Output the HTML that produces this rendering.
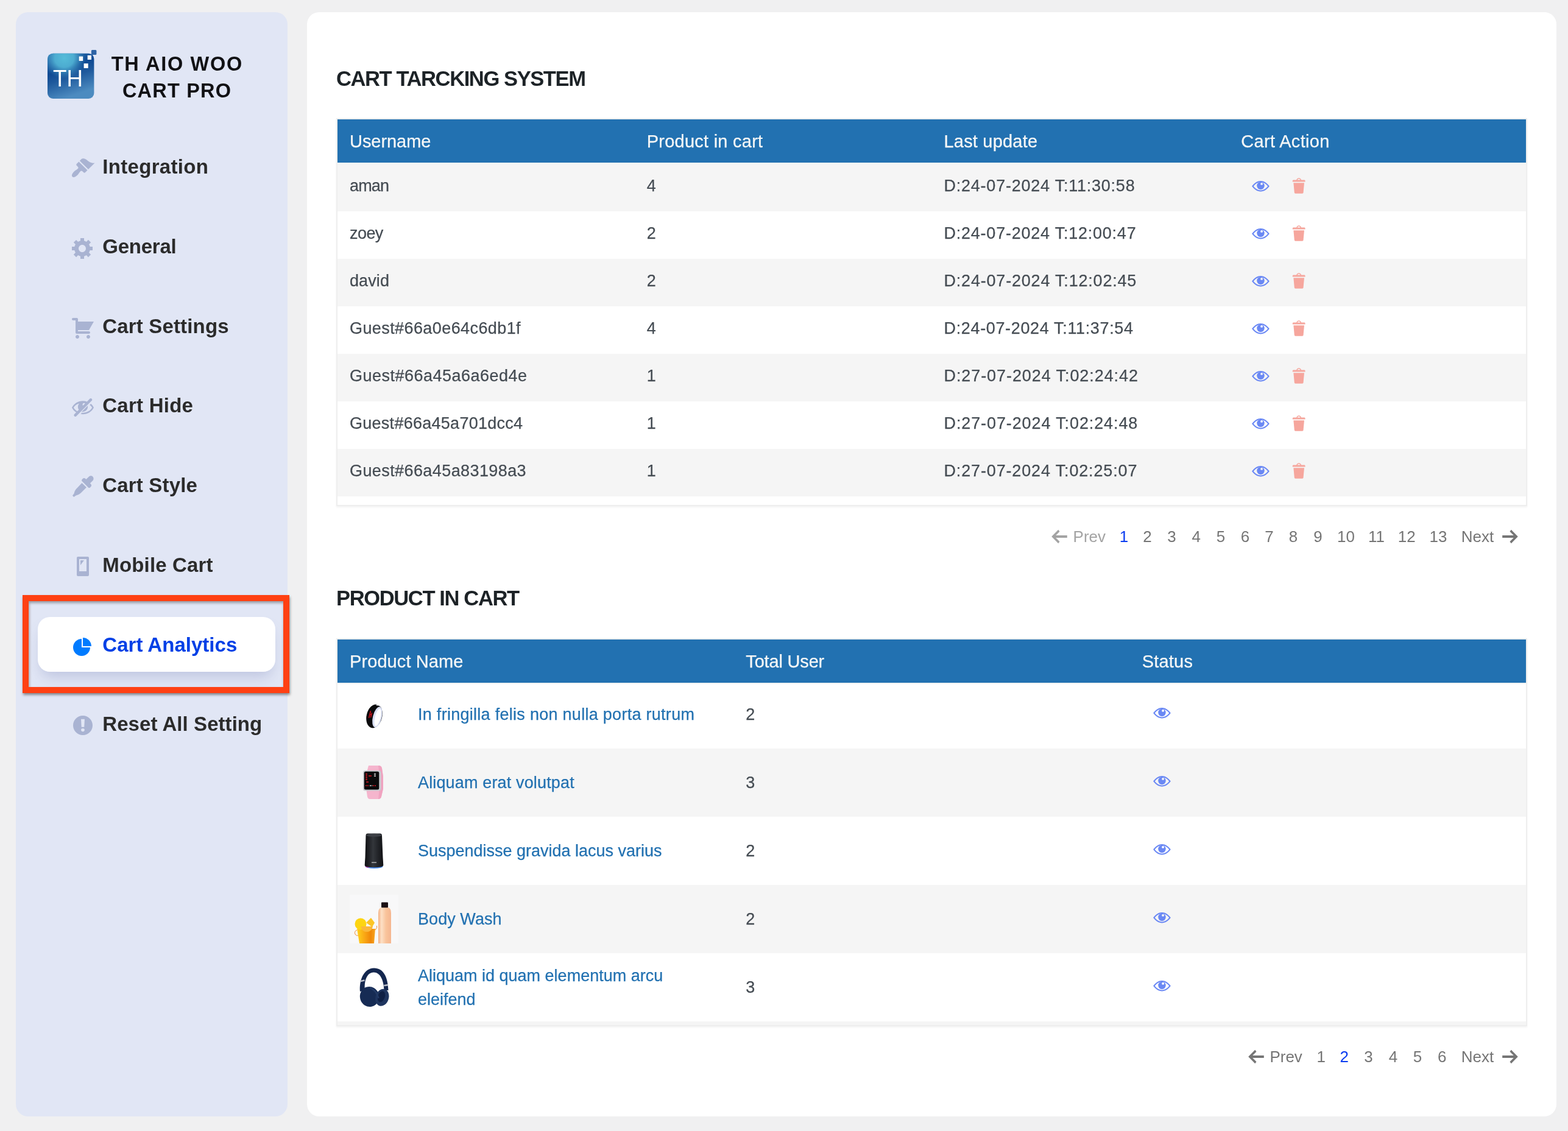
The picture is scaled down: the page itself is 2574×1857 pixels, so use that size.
<!DOCTYPE html>
<html lang="en">
<head>
<meta charset="utf-8">
<title>TH AIO Woo Cart Pro - Cart Analytics</title>
<style>

*{box-sizing:border-box;}
html,body{margin:0;padding:0;}
body{width:2574px;height:1857px;overflow:hidden;background:#f0f0f1;font-family:"Liberation Sans",sans-serif;color:#3c434a;}
.page{position:relative;width:2574px;height:1857px;overflow:hidden;will-change:transform;}
.sidebar{position:absolute;left:26px;top:20px;width:446px;height:1813px;background:#e1e6f5;border-radius:20px;}
.brand{position:absolute;left:0;top:0;width:446px;height:200px;}
.logo{position:absolute;left:52px;top:62px;}
.brand-name{position:absolute;left:134px;top:64px;width:260px;text-align:center;font-weight:700;font-size:32.5px;line-height:43.6px;color:#111114;white-space:nowrap;}
.bn1{letter-spacing:1.7px;margin-right:-1.7px;}
.bn2{letter-spacing:1.2px;margin-right:-1.2px;}
.nav-item{position:absolute;left:36px;width:390px;height:90px;border-radius:20px;display:block;text-decoration:none;color:#2b2b2b;}
.nav-item .ic{position:absolute;left:54px;top:27.5px;}
.nav-label{position:absolute;left:106.300px;top:0.500px;font-size:33px;font-weight:700;line-height:90px;white-space:nowrap;}
.nav-item.active{background:#fff;color:#0040e6;box-shadow:0 14px 22px -6px rgba(96,108,168,0.27);}
.hl{position:absolute;left:37px;top:977px;width:438px;height:161px;border:10px solid #ff4013;box-shadow:1px 3px 4px rgba(0,0,0,0.42), inset 1px 3px 4px rgba(0,0,0,0.34);}
.main{position:absolute;left:504px;top:20px;width:2051px;height:1813px;background:#fff;border-radius:20px;}
.ttl{position:absolute;left:48px;margin:0;font-size:34.600px;font-weight:700;color:#1d2327;line-height:40px;white-space:nowrap;}
.ttl1{top:88.500px;letter-spacing:-1.440px;}
.ttl2{top:941.700px;letter-spacing:-1.400px;}
.tw{position:absolute;left:48px;width:1955px;border:2px solid #eeeeee;box-shadow:0 2px 3px rgba(0,0,0,0.05);background:#fff;}
.tw1{top:174px;}
.tw2{top:1028px;}
.tbl{width:1951px;border-collapse:separate;border-spacing:0;table-layout:fixed;font-size:27px;}
.tbl th{height:73px;padding:1px 20px 0 20px;background:#2271b1;color:#f6f7f7;font-weight:400;font-size:29px;-webkit-text-stroke:0.25px #f6f7f7;text-align:left;border-bottom:2px solid #f3f3f3;vertical-align:middle;white-space:nowrap;}
.tbl td{height:78px;padding:0 20px 5.600px 20px;vertical-align:middle;color:#454c53;white-space:nowrap;-webkit-text-stroke:0.25px #454c53;}
.t1 tbody tr:nth-child(odd) td{background:#f5f5f5;}
.t2 tbody tr:nth-child(even) td{background:#f5f5f5;}
.tbl tr.tail td{height:14px;padding:0;}
.t2 tr.tail td{height:6px;background:#f5f5f5;}
.t2 td{height:112px;padding-bottom:0;}
.t2 tr.first td{height:106px;padding-bottom:6px;}
.ib{display:inline-block;width:32px;height:32px;margin:0 16px;vertical-align:middle;}
.ib .ic{display:block;}
.t1 .ib{position:relative;top:-3.5px;}
.t2 .ib{position:relative;top:-3.700px;}

td.act{padding-bottom:0;}
.prod{display:flex;align-items:center;}
.th{display:block;flex:none;}
.pl{margin-left:32px;color:#2271b1;-webkit-text-stroke:0.25px #2271b1;position:relative;top:0.500px;line-height:39px;white-space:normal;width:498px;}
.pager{position:absolute;left:0;width:2051px;height:40px;font-size:26px;color:#757575;}
.p1{top:841px;}
.p2{top:1695px;}
.pg{position:absolute;top:0;height:40px;line-height:40px;text-align:center;white-space:nowrap;}
.pg.prev,.pg.next{display:flex;align-items:center;text-align:left;}
.pg.cur{color:#0a3cf0;}
.pg.dis{color:#a3a3a3;}
.pg .arr{display:block;flex:none;}
.pg.prev .pt{margin-left:6.9px;}
.pg.next .pt{margin-right:10.5px;}

</style>
</head>
<body>
<div class="page">
<aside class="sidebar">
  <div class="brand">
    <svg class="logo" width="84" height="82" viewBox="0 0 84 82">
<defs>
<linearGradient id="lgA" x1="0" y1="0" x2="0.35" y2="1"><stop offset="0" stop-color="#2f74b2"/><stop offset="0.42" stop-color="#0f4a93"/><stop offset="0.62" stop-color="#1f5a9d"/><stop offset="1" stop-color="#4c8bc0"/></linearGradient>
<radialGradient id="lgB" cx="0.36" cy="0.1" r="0.46"><stop offset="0" stop-color="#55bcd9"/><stop offset="0.45" stop-color="#4fb0d3" stop-opacity="0.95"/><stop offset="1" stop-color="#3f8fc0" stop-opacity="0"/></radialGradient>
</defs>
<rect x="0" y="5.700" width="76.400" height="74.300" rx="9" fill="url(#lgA)"/>
<rect x="0" y="5.700" width="76.400" height="74.300" rx="9" fill="url(#lgB)"/>
<rect x="71.900" y="0" width="8.500" height="8" rx="1.500" fill="#2f64a6"/>
<rect x="51.700" y="10.600" width="6.500" height="7.400" fill="#fff"/>
<rect x="65.700" y="8.800" width="6.300" height="7.200" fill="#fff"/>
<rect x="59.600" y="22.200" width="7.100" height="7.700" fill="#fff"/>
<text x="9" y="60" font-family="'Liberation Sans', sans-serif" font-size="39" fill="#fff" textLength="49" lengthAdjust="spacingAndGlyphs">TH</text>
</svg>
    <div class="brand-name"><span class="bn1">TH AIO WOO</span><br><span class="bn2">CART PRO</span></div>
  </div>
  <nav>
<a class="nav-item" style="top:208.50px"><svg class="ic" width="40" height="40" viewBox="0 0 20 20" ><path fill="#a9b3d2" d="M14.48 11.06L7.41 3.99l1.5-1.5c.5-.56 2.3-.47 3.51.32 1.21.8 1.43 1.28 2.92 2.1 1.18.64 2.45 1.26 4.45.85zm-.71.71L6.7 4.7 4.93 6.47c-.39.39-.39 1.02 0 1.41l1.06 1.06c.39.39.39 1.03 0 1.42-.6.6-1.43 1.11-2.21 1.69-.35.26-.7.53-1.01.84C1.43 14.23.4 16.08 1.4 17.07c.99 1 2.84-.03 4.18-1.36.31-.31.58-.66.85-1.02.57-.78 1.08-1.61 1.69-2.21.39-.39 1.02-.39 1.41 0l1.06 1.06c.39.39 1.02.39 1.41 0z"/></svg><span class="nav-label" style="letter-spacing:0.31px">Integration</span></a>
<a class="nav-item" style="top:339.25px"><svg class="ic" width="40" height="40" viewBox="0 0 20 20" ><path fill="#a9b3d2" d="M18 12h-2.18c-.17.7-.44 1.35-.81 1.93l1.54 1.54-2.1 2.1-1.54-1.54c-.58.36-1.23.63-1.91.79V19H8v-2.18c-.68-.16-1.33-.43-1.91-.79l-1.54 1.54-2.12-2.12 1.54-1.54c-.36-.58-.63-1.23-.79-1.91H1V9.03h2.17c.16-.7.44-1.35.8-1.94L2.43 5.55l2.1-2.1 1.54 1.54c.58-.37 1.24-.64 1.93-.81V2h3v2.18c.68.16 1.33.43 1.91.79l1.54-1.54 2.12 2.12-1.54 1.54c.36.59.64 1.24.8 1.94H18V12zm-8.5 1.5c1.66 0 3-1.34 3-3s-1.34-3-3-3-3 1.34-3 3 1.34 3 3 3z"/></svg><span class="nav-label" style="letter-spacing:-0.25px">General</span></a>
<a class="nav-item" style="top:470.00px"><svg class="ic" width="40" height="40" viewBox="0 0 20 20" ><path fill="#a9b3d2" d="M6 13h9c.55 0 1 .45 1 1s-.45 1-1 1H5c-.55 0-1-.45-1-1V4H2c-.55 0-1-.45-1-1s.45-1 1-1h3c.55 0 1 .45 1 1v2h13l-4 7H6v1zm-.5 3c.83 0 1.5.67 1.5 1.5S6.33 19 5.5 19 4 18.33 4 17.5 4.67 16 5.5 16zm9 0c.83 0 1.5.67 1.5 1.5s-.67 1.5-1.5 1.5-1.5-.67-1.5-1.5.67-1.5 1.5-1.5z"/></svg><span class="nav-label" style="letter-spacing:0.16px">Cart Settings</span></a>
<a class="nav-item" style="top:600.75px"><svg class="ic" width="40" height="40" viewBox="0 0 20 20" ><path fill="#a9b3d2" d="M17.2 3.3l.16.17c.39.39.39 1.02 0 1.41L4.55 17.7c-.39.39-1.03.39-1.41 0l-.17-.17c-.39-.39-.39-1.02 0-1.41l1.59-1.6c-1.57-1-2.76-2.3-3.56-3.93.81-1.65 2.03-2.98 3.64-3.99S8.04 5.09 10 5.09c1.2 0 2.33.21 3.4.6l2.38-2.39c.39-.39 1.03-.39 1.42 0zm-7.09 4.01c-.23.25-.34.54-.34.88 0 .31.12.58.31.81l1.8-1.79c-.13-.12-.28-.21-.45-.26-.11-.01-.28-.03-.49-.04-.33.03-.6.16-.83.4zM2.4 10.59c.69 1.23 1.71 2.25 3.05 3.05l1.28-1.28c-.51-.69-.77-1.47-.77-2.36 0-1.06.36-1.98 1.09-2.76-1.04.27-1.96.7-2.76 1.26-.8.58-1.43 1.27-1.89 2.09zm13.22-2.13l.96-.96c1.02.86 1.83 1.89 2.42 3.09-.81 1.65-2.03 2.98-3.64 3.99s-3.4 1.51-5.36 1.51c-.63 0-1.24-.07-1.83-.18l1.07-1.07c.25.02.5.05.76.05 1.63 0 3.13-.4 4.5-1.21s2.4-1.84 3.1-3.09c-.46-.82-1.09-1.53-1.89-2.13zm-7.02 6.09l5.36-5.4c.05.27.08.54.08.83 0 1.08-.38 2.01-1.15 2.8-.76.78-1.68 1.2-2.76 1.26-.55.03-1.06.19-1.53.51z"/></svg><span class="nav-label" style="letter-spacing:0.24px">Cart Hide</span></a>
<a class="nav-item" style="top:731.50px"><svg class="ic" width="40" height="40" viewBox="0 0 20 20" ><path fill="#a9b3d2" d="M15.03 1.700C15.800.950 17.400 1 18.200 1.850 19 2.700 19 4.200 18.250 4.950L15.950 7.300l.650.650c.600.600.600 1.450 0 2.050l-.700.700c-.400.350-1 .350-1.400 0L9.300 5.500c-.350-.400-.350-1 0-1.400l.700-.700c.600-.600 1.450-.600 2.050 0l.650.650zM9.220 7.040l3.750 3.600L8.300 15.300c-.800.800-1.800 1.300-2.800 1.600l-1.100.300-1.800 1.300-1.100-1.100 1.300-1.800.300-1.100c.300-1 .800-2 1.600-2.800z"/></svg><span class="nav-label" style="letter-spacing:0.17px">Cart Style</span></a>
<a class="nav-item" style="top:862.25px"><svg class="ic" width="40" height="40" viewBox="0 0 20 20" ><path fill="#a9b3d2" d="M6 2h8c.55 0 1 .45 1 1v14c0 .55-.45 1-1 1H6c-.55 0-1-.45-1-1V3c0-.55.45-1 1-1zm7 12V4H7v10h6zM8 5h3l-3 4V5z"/></svg><span class="nav-label" style="letter-spacing:0.16px">Mobile Cart</span></a>
<a class="nav-item active" style="top:993.00px"><svg class="ic" width="40" height="40" viewBox="0 0 20 20" ><path fill="#007bff" d="M10 10V3c3.87 0 7 3.13 7 7h-7zM9 4v7h7c0 3.87-3.13 7-7 7s-7-3.13-7-7 3.13-7 7-7z"/></svg><span class="nav-label" style="letter-spacing:0.02px">Cart Analytics</span></a>
<a class="nav-item" style="top:1123.75px"><svg class="ic" width="40" height="40" viewBox="0 0 20 20" ><path fill="#a9b3d2" d="M10 2c4.42 0 8 3.58 8 8s-3.58 8-8 8-8-3.58-8-8 3.58-8 8-8zm1.13 9.38l.35-6.46H8.52l.35 6.46h2.26zm-.09 3.36c.24-.23.37-.55.37-.96 0-.42-.12-.74-.36-.97s-.59-.35-1.06-.35-.82.12-1.07.35-.37.55-.37.97c0 .41.13.73.38.96.26.23.61.34 1.06.34s.8-.11 1.05-.34z"/></svg><span class="nav-label" style="letter-spacing:0.06px">Reset All Setting</span></a>
  </nav>
</aside>
<div class="hl"></div>
<main class="main">
  <h2 class="ttl ttl1">CART TARCKING SYSTEM</h2>
  <div class="tw tw1"><table class="tbl t1"><thead><tr><th><span style="letter-spacing:-0.06px">Username</span></th><th><span style="letter-spacing:0.24px">Product in cart</span></th><th><span style="letter-spacing:0.20px">Last update</span></th><th><span style="letter-spacing:0.33px">Cart Action</span></th></tr></thead><tbody><tr><td><span class="u" style="letter-spacing:-0.84px">aman</span></td><td><span class="n">4</span></td><td><span class="d" style="letter-spacing:0.77px">D:24-07-2024 T:11:30:58</span></td><td class="act"><span class="ib"><svg class="ic eye" width="32" height="32" viewBox="0 0 20 20"><path fill="#6a88f4" fill-rule="evenodd" d="M1.300 10.500C4 6.800 7 5 10.300 5s6.300 1.800 9 5.500c-2.700 3.600-5.700 5.400-9 5.400s-6.300-1.800-9-5.400zm1.650 0c2.250 2.800 4.650 4.200 7.350 4.200s5.100-1.400 7.350-4.200C15.400 7.600 13 6.200 10.300 6.200S5.200 7.600 2.950 10.500z"/><circle cx="10.300" cy="10" r="3.900" fill="#6a88f4"/><circle cx="11.300" cy="8.050" r="1.200" fill="#f5f5f5"/></svg></span><span class="ib"><svg class="ic" width="32" height="32" viewBox="0 0 20 20" ><path fill="#f6a69d" d="M12 4h3c.6 0 1 .4 1 1v1H3V5c0-.6.5-1 1-1h3c.2-1.1 1.3-2 2.5-2s2.3.9 2.5 2zM8 4h3c-.2-.6-.9-1-1.5-1S8.200 3.400 8 4zM4 7h11l-.9 10.100c0 .500-.500.900-1 .900H5.900c-.500 0-.900-.400-1-.900L4 7z"/></svg></span></td></tr>
<tr><td><span class="u" style="letter-spacing:-0.57px">zoey</span></td><td><span class="n">2</span></td><td><span class="d" style="letter-spacing:0.77px">D:24-07-2024 T:12:00:47</span></td><td class="act"><span class="ib"><svg class="ic eye" width="32" height="32" viewBox="0 0 20 20"><path fill="#6a88f4" fill-rule="evenodd" d="M1.300 10.500C4 6.800 7 5 10.300 5s6.300 1.800 9 5.500c-2.700 3.600-5.700 5.400-9 5.400s-6.300-1.800-9-5.400zm1.650 0c2.250 2.800 4.650 4.200 7.350 4.200s5.100-1.400 7.350-4.200C15.400 7.600 13 6.200 10.300 6.200S5.200 7.600 2.950 10.500z"/><circle cx="10.300" cy="10" r="3.900" fill="#6a88f4"/><circle cx="11.300" cy="8.050" r="1.200" fill="#ffffff"/></svg></span><span class="ib"><svg class="ic" width="32" height="32" viewBox="0 0 20 20" ><path fill="#f6a69d" d="M12 4h3c.6 0 1 .4 1 1v1H3V5c0-.6.5-1 1-1h3c.2-1.1 1.3-2 2.5-2s2.3.9 2.5 2zM8 4h3c-.2-.6-.9-1-1.5-1S8.200 3.400 8 4zM4 7h11l-.9 10.100c0 .500-.500.900-1 .900H5.900c-.500 0-.900-.400-1-.900L4 7z"/></svg></span></td></tr>
<tr><td><span class="u" style="letter-spacing:0.10px">david</span></td><td><span class="n">2</span></td><td><span class="d" style="letter-spacing:0.80px">D:24-07-2024 T:12:02:45</span></td><td class="act"><span class="ib"><svg class="ic eye" width="32" height="32" viewBox="0 0 20 20"><path fill="#6a88f4" fill-rule="evenodd" d="M1.300 10.500C4 6.800 7 5 10.300 5s6.300 1.800 9 5.500c-2.700 3.600-5.700 5.400-9 5.400s-6.300-1.800-9-5.400zm1.650 0c2.250 2.800 4.650 4.200 7.350 4.200s5.100-1.400 7.350-4.200C15.400 7.600 13 6.200 10.300 6.200S5.200 7.600 2.950 10.500z"/><circle cx="10.300" cy="10" r="3.900" fill="#6a88f4"/><circle cx="11.300" cy="8.050" r="1.200" fill="#f5f5f5"/></svg></span><span class="ib"><svg class="ic" width="32" height="32" viewBox="0 0 20 20" ><path fill="#f6a69d" d="M12 4h3c.6 0 1 .4 1 1v1H3V5c0-.6.5-1 1-1h3c.2-1.1 1.3-2 2.5-2s2.3.9 2.5 2zM8 4h3c-.2-.6-.9-1-1.5-1S8.200 3.400 8 4zM4 7h11l-.9 10.100c0 .500-.500.900-1 .900H5.900c-.500 0-.900-.400-1-.900L4 7z"/></svg></span></td></tr>
<tr><td><span class="u g" style="letter-spacing:0.41px">Guest#66a0e64c6db1f</span></td><td><span class="n">4</span></td><td><span class="d" style="letter-spacing:0.65px">D:24-07-2024 T:11:37:54</span></td><td class="act"><span class="ib"><svg class="ic eye" width="32" height="32" viewBox="0 0 20 20"><path fill="#6a88f4" fill-rule="evenodd" d="M1.300 10.500C4 6.800 7 5 10.300 5s6.300 1.800 9 5.500c-2.700 3.600-5.700 5.400-9 5.400s-6.300-1.800-9-5.400zm1.650 0c2.250 2.800 4.650 4.200 7.350 4.200s5.100-1.400 7.350-4.200C15.400 7.600 13 6.200 10.300 6.200S5.200 7.600 2.950 10.500z"/><circle cx="10.300" cy="10" r="3.900" fill="#6a88f4"/><circle cx="11.300" cy="8.050" r="1.200" fill="#ffffff"/></svg></span><span class="ib"><svg class="ic" width="32" height="32" viewBox="0 0 20 20" ><path fill="#f6a69d" d="M12 4h3c.6 0 1 .4 1 1v1H3V5c0-.6.5-1 1-1h3c.2-1.1 1.3-2 2.5-2s2.3.9 2.5 2zM8 4h3c-.2-.6-.9-1-1.5-1S8.200 3.400 8 4zM4 7h11l-.9 10.100c0 .500-.500.900-1 .900H5.900c-.500 0-.900-.400-1-.900L4 7z"/></svg></span></td></tr>
<tr><td><span class="u g" style="letter-spacing:0.48px">Guest#66a45a6a6ed4e</span></td><td><span class="n">1</span></td><td><span class="d" style="letter-spacing:0.92px">D:27-07-2024 T:02:24:42</span></td><td class="act"><span class="ib"><svg class="ic eye" width="32" height="32" viewBox="0 0 20 20"><path fill="#6a88f4" fill-rule="evenodd" d="M1.300 10.500C4 6.800 7 5 10.300 5s6.300 1.800 9 5.500c-2.700 3.600-5.700 5.400-9 5.400s-6.300-1.800-9-5.400zm1.650 0c2.250 2.800 4.650 4.200 7.350 4.200s5.100-1.400 7.350-4.200C15.400 7.600 13 6.200 10.300 6.200S5.200 7.600 2.950 10.500z"/><circle cx="10.300" cy="10" r="3.900" fill="#6a88f4"/><circle cx="11.300" cy="8.050" r="1.200" fill="#f5f5f5"/></svg></span><span class="ib"><svg class="ic" width="32" height="32" viewBox="0 0 20 20" ><path fill="#f6a69d" d="M12 4h3c.6 0 1 .4 1 1v1H3V5c0-.6.5-1 1-1h3c.2-1.1 1.3-2 2.5-2s2.3.9 2.5 2zM8 4h3c-.2-.6-.9-1-1.5-1S8.200 3.400 8 4zM4 7h11l-.9 10.100c0 .500-.500.900-1 .900H5.900c-.500 0-.900-.400-1-.900L4 7z"/></svg></span></td></tr>
<tr><td><span class="u g" style="letter-spacing:0.27px">Guest#66a45a701dcc4</span></td><td><span class="n">1</span></td><td><span class="d" style="letter-spacing:0.89px">D:27-07-2024 T:02:24:48</span></td><td class="act"><span class="ib"><svg class="ic eye" width="32" height="32" viewBox="0 0 20 20"><path fill="#6a88f4" fill-rule="evenodd" d="M1.300 10.500C4 6.800 7 5 10.300 5s6.300 1.800 9 5.500c-2.700 3.600-5.700 5.400-9 5.400s-6.300-1.800-9-5.400zm1.650 0c2.250 2.800 4.650 4.200 7.350 4.200s5.100-1.400 7.350-4.200C15.400 7.600 13 6.200 10.300 6.200S5.200 7.600 2.950 10.500z"/><circle cx="10.300" cy="10" r="3.900" fill="#6a88f4"/><circle cx="11.300" cy="8.050" r="1.200" fill="#ffffff"/></svg></span><span class="ib"><svg class="ic" width="32" height="32" viewBox="0 0 20 20" ><path fill="#f6a69d" d="M12 4h3c.6 0 1 .4 1 1v1H3V5c0-.6.5-1 1-1h3c.2-1.1 1.3-2 2.5-2s2.3.9 2.5 2zM8 4h3c-.2-.6-.9-1-1.5-1S8.200 3.400 8 4zM4 7h11l-.9 10.100c0 .500-.500.900-1 .900H5.900c-.500 0-.900-.400-1-.900L4 7z"/></svg></span></td></tr>
<tr><td><span class="u g" style="letter-spacing:0.41px">Guest#66a45a83198a3</span></td><td><span class="n">1</span></td><td><span class="d" style="letter-spacing:0.85px">D:27-07-2024 T:02:25:07</span></td><td class="act"><span class="ib"><svg class="ic eye" width="32" height="32" viewBox="0 0 20 20"><path fill="#6a88f4" fill-rule="evenodd" d="M1.300 10.500C4 6.800 7 5 10.300 5s6.300 1.800 9 5.500c-2.700 3.600-5.700 5.400-9 5.400s-6.300-1.800-9-5.400zm1.650 0c2.250 2.800 4.650 4.200 7.350 4.200s5.100-1.400 7.350-4.200C15.400 7.600 13 6.200 10.300 6.200S5.200 7.600 2.950 10.500z"/><circle cx="10.300" cy="10" r="3.900" fill="#6a88f4"/><circle cx="11.300" cy="8.050" r="1.200" fill="#f5f5f5"/></svg></span><span class="ib"><svg class="ic" width="32" height="32" viewBox="0 0 20 20" ><path fill="#f6a69d" d="M12 4h3c.6 0 1 .4 1 1v1H3V5c0-.6.5-1 1-1h3c.2-1.1 1.3-2 2.5-2s2.3.9 2.5 2zM8 4h3c-.2-.6-.9-1-1.5-1S8.200 3.400 8 4zM4 7h11l-.9 10.100c0 .500-.500.900-1 .900H5.900c-.500 0-.900-.400-1-.900L4 7z"/></svg></span></td></tr><tr class="tail"><td colspan="4"></td></tr></tbody></table></div>
  <div class="pager p1"><span class="pg prev dis" style="left:1218.7px"><svg class="arr" width="32" height="32" viewBox="0 0 20 20"><path fill="currentColor" d="M18 8.800v2.400H6.400l3.900 3.900-1.400 1.900L2 10l6.900-7 1.400 1.900-3.900 3.900H18z"/></svg><span class="pt">Prev</span></span><span class="pg cur" style="left:1311.0px;width:60px">1</span><span class="pg " style="left:1349.6px;width:60px">2</span><span class="pg " style="left:1389.5px;width:60px">3</span><span class="pg " style="left:1429.8px;width:60px">4</span><span class="pg " style="left:1469.9px;width:60px">5</span><span class="pg " style="left:1510.0px;width:60px">6</span><span class="pg " style="left:1549.5px;width:60px">7</span><span class="pg " style="left:1589.0px;width:60px">8</span><span class="pg " style="left:1629.5px;width:60px">9</span><span class="pg " style="left:1675.5px;width:60px">10</span><span class="pg " style="left:1725.5px;width:60px">11</span><span class="pg " style="left:1775.3px;width:60px">12</span><span class="pg " style="left:1827.0px;width:60px">13</span><span class="pg next" style="left:1894.8px"><span class="pt">Next</span><svg class="arr" width="32" height="32" viewBox="0 0 20 20"><path fill="currentColor" d="M2 11.200V8.800h11.600L9.700 4.900 11.100 3 18 10l-6.900 7-1.400-1.900 3.900-3.900H2z"/></svg></span></div>
  <h2 class="ttl ttl2">PRODUCT IN CART</h2>
  <div class="tw tw2"><table class="tbl t2"><thead><tr><th><span style="letter-spacing:0.09px">Product Name</span></th><th><span style="letter-spacing:-0.18px">Total User</span></th><th><span style="letter-spacing:0.22px">Status</span></th></tr></thead><tbody><tr class="first"><td><div class="prod"><svg class="th" width="80" height="80" viewBox="0 0 80 80">
<g transform="rotate(14 40.500 42.800)">
<ellipse cx="40.500" cy="42.800" rx="12.800" ry="19.700" fill="#0b0b0d"/>
<ellipse cx="45.600" cy="43.200" rx="7.300" ry="17.400" fill="#d9dff3"/>
<ellipse cx="46.400" cy="43.600" rx="4.600" ry="14.600" fill="#ffffff"/>
<path d="M39 24.300 q5 -1.600 8.500 0.600" stroke="#f4f6fd" stroke-width="1.600" fill="none"/>
<path d="M32.600 36 v12 M35.300 38.500 v8 M32.600 42 h2.700" stroke="#e0101c" stroke-width="1.400" fill="none"/>
</g></svg><a class="pl pl0" style="letter-spacing:0.28px">In fringilla felis non nulla porta rutrum</a></div></td><td><span class="n">2</span></td><td class="act"><span class="ib"><svg class="ic eye" width="32" height="32" viewBox="0 0 20 20"><path fill="#6a88f4" fill-rule="evenodd" d="M1.300 10.500C4 6.800 7 5 10.300 5s6.300 1.800 9 5.500c-2.700 3.600-5.700 5.400-9 5.400s-6.300-1.800-9-5.400zm1.650 0c2.250 2.800 4.650 4.200 7.350 4.200s5.100-1.400 7.350-4.200C15.400 7.600 13 6.200 10.300 6.200S5.200 7.600 2.950 10.500z"/><circle cx="10.300" cy="10" r="3.900" fill="#6a88f4"/><circle cx="11.300" cy="8.050" r="1.200" fill="#ffffff"/></svg></span></td></tr>
<tr><td><div class="prod"><svg class="th" width="80" height="80" viewBox="0 0 80 80">
<path d="M31 12 h17 q4 0 5 4 l2 14 v20 l-3 13 q-1 4 -5 4 h-14 q-3 0 -4 -4 l-2 -14 v-22 z" fill="#f5b5cd"/>
<path d="M47 12 q5 0 6 5 l2 13 v20 l-3 13 q-1 4 -5 4 l2 -18 v-20 z" fill="#f0a3c0"/>
<rect x="22" y="20" width="29.500" height="33.500" rx="3.500" fill="#c9cbd0"/>
<rect x="23.800" y="21.800" width="24.500" height="29.800" rx="2.500" fill="#0a0a0c"/>
<path d="M26 26 h3 M26 29 h3 M26 32 h3 M26 35 h3 M31 29 h5 M27 39 h4 M26 45 h2 M29 45 h2 M38 45 h2 M41 45 h2" stroke="#e01822" stroke-width="1.400" fill="none"/>
<path d="M33 45 h2 M36 45 h1 M40 29 h3 M40 26 h3" stroke="#f2f2f2" stroke-width="1.400" fill="none"/>
</svg><a class="pl pl1" style="letter-spacing:0.15px">Aliquam erat volutpat</a></div></td><td><span class="n">3</span></td><td class="act"><span class="ib"><svg class="ic eye" width="32" height="32" viewBox="0 0 20 20"><path fill="#6a88f4" fill-rule="evenodd" d="M1.300 10.500C4 6.800 7 5 10.300 5s6.300 1.800 9 5.500c-2.700 3.600-5.700 5.400-9 5.400s-6.300-1.800-9-5.400zm1.650 0c2.250 2.800 4.650 4.200 7.350 4.200s5.100-1.400 7.350-4.200C15.400 7.600 13 6.200 10.300 6.200S5.200 7.600 2.950 10.500z"/><circle cx="10.300" cy="10" r="3.900" fill="#6a88f4"/><circle cx="11.300" cy="8.050" r="1.200" fill="#f5f5f5"/></svg></span></td></tr>
<tr><td><div class="prod"><svg class="th" width="80" height="80" viewBox="0 0 80 80">
<defs><linearGradient id="spk" x1="0" y1="0" x2="1" y2="0"><stop offset="0" stop-color="#0e0f12"/><stop offset="0.45" stop-color="#33363b"/><stop offset="1" stop-color="#101114"/></linearGradient></defs>
<ellipse cx="40" cy="65.500" rx="14.500" ry="3.600" fill="#4a8cf0"/>
<ellipse cx="30" cy="64.600" rx="4.500" ry="2.800" fill="#f03cb0"/>
<path d="M26.500 15 q0 -3.400 3.500 -3.400 h19.500 q3.500 0 3.500 3.400 l1.500 36 q0.600 8 0.800 13 q-1 3.200 -15.300 3.200 q-14.300 0 -15.300 -3.200 q0.200 -5 0.800 -13 z" fill="url(#spk)"/>
<ellipse cx="40" cy="14.300" rx="12.800" ry="2.600" fill="#3d4046"/>
<rect x="36" y="58.500" width="8" height="1.300" fill="#bdbdbd"/>
</svg><a class="pl pl2" style="letter-spacing:-0.01px">Suspendisse gravida lacus varius</a></div></td><td><span class="n">2</span></td><td class="act"><span class="ib"><svg class="ic eye" width="32" height="32" viewBox="0 0 20 20"><path fill="#6a88f4" fill-rule="evenodd" d="M1.300 10.500C4 6.800 7 5 10.300 5s6.300 1.800 9 5.500c-2.700 3.600-5.700 5.400-9 5.400s-6.300-1.800-9-5.400zm1.650 0c2.250 2.800 4.650 4.200 7.350 4.200s5.100-1.400 7.350-4.200C15.400 7.600 13 6.200 10.300 6.200S5.200 7.600 2.950 10.500z"/><circle cx="10.300" cy="10" r="3.900" fill="#6a88f4"/><circle cx="11.300" cy="8.050" r="1.200" fill="#ffffff"/></svg></span></td></tr>
<tr><td><div class="prod"><svg class="th" width="80" height="80" viewBox="0 0 80 80">
<defs><linearGradient id="btl" x1="0" y1="0" x2="1" y2="0"><stop offset="0" stop-color="#f3b184"/><stop offset="0.25" stop-color="#fde0c6"/><stop offset="0.6" stop-color="#f9c49c"/><stop offset="1" stop-color="#f5b690"/></linearGradient>
<linearGradient id="bkt" x1="0" y1="0" x2="1" y2="0"><stop offset="0" stop-color="#ffd21c"/><stop offset="0.45" stop-color="#f9a414"/><stop offset="0.75" stop-color="#f08808"/><stop offset="1" stop-color="#f7a520"/></linearGradient></defs>
<rect width="80" height="80" fill="#f8f8f9"/>
<path d="M47 80 V30 q0 -8 5 -9 h11 q5 1 5 9 V80 z" fill="url(#btl)"/>
<rect x="52" y="12.500" width="11" height="8.800" rx="1" fill="#1c1014"/>
<path d="M12 56 h30 l-2 24 h-24 z" fill="url(#bkt)"/>
<circle cx="18" cy="48" r="9.500" fill="#fdd512"/>
<path d="M27 46 l8 -8 l6 8 l-4 7 z" fill="#fbc526"/>
<path d="M18.500 52 h19.500 q-2 9 -10 9 q-8 0 -9.500 -9z" fill="#fbb83a"/>
<path d="M12 58 q-5 2 -3 7 q2 3 5 2 M42 58 q4 -4 2.500 -7" stroke="#f2903a" stroke-width="1" fill="none"/>
</svg><a class="pl pl3" style="letter-spacing:0.06px">Body Wash</a></div></td><td><span class="n">2</span></td><td class="act"><span class="ib"><svg class="ic eye" width="32" height="32" viewBox="0 0 20 20"><path fill="#6a88f4" fill-rule="evenodd" d="M1.300 10.500C4 6.800 7 5 10.300 5s6.300 1.800 9 5.500c-2.700 3.600-5.700 5.400-9 5.400s-6.300-1.800-9-5.400zm1.650 0c2.250 2.800 4.650 4.200 7.350 4.200s5.100-1.400 7.350-4.200C15.400 7.600 13 6.200 10.300 6.200S5.200 7.600 2.950 10.500z"/><circle cx="10.300" cy="10" r="3.900" fill="#6a88f4"/><circle cx="11.300" cy="8.050" r="1.200" fill="#f5f5f5"/></svg></span></td></tr>
<tr><td><div class="prod"><svg class="th" width="80" height="80" viewBox="0 0 80 80">
<path d="M17 47 C15.500 30 22 9 40 8.500 C55 8.500 62.500 22 63.500 45 L56.500 45 C56 28 50 15.500 39.500 15.500 C28 15.500 23.500 30 25 45 Z" fill="#14274f"/>
<ellipse cx="32.500" cy="55.500" rx="15.600" ry="16.600" transform="rotate(-15 32.500 55.500)" fill="#162b54"/>
<ellipse cx="53.300" cy="56.800" rx="10.800" ry="14.300" transform="rotate(18 53.300 56.800)" fill="#1f355f"/>
<ellipse cx="52" cy="55.300" rx="5.800" ry="9.300" transform="rotate(18 52 55.300)" fill="#0f2045"/>
<path d="M33 41 C40 43 45 50 47.500 58" stroke="#223a66" stroke-width="2.500" fill="none"/>
<path d="M17.300 30.300 l7.200 -1.800 M56.300 37.300 l6.800 -1.200" stroke="#b9bdc8" stroke-width="2.600" fill="none"/>
</svg><a class="pl pl4">Aliquam id quam elementum arcu eleifend</a></div></td><td><span class="n">3</span></td><td class="act"><span class="ib"><svg class="ic eye" width="32" height="32" viewBox="0 0 20 20"><path fill="#6a88f4" fill-rule="evenodd" d="M1.300 10.500C4 6.800 7 5 10.300 5s6.300 1.800 9 5.500c-2.700 3.600-5.700 5.400-9 5.400s-6.300-1.800-9-5.400zm1.650 0c2.250 2.800 4.650 4.200 7.350 4.200s5.100-1.400 7.350-4.200C15.400 7.600 13 6.200 10.300 6.200S5.200 7.600 2.950 10.500z"/><circle cx="10.300" cy="10" r="3.900" fill="#6a88f4"/><circle cx="11.300" cy="8.050" r="1.200" fill="#ffffff"/></svg></span></td></tr><tr class="tail"><td colspan="3"></td></tr></tbody></table></div>
  <div class="pager p2"><span class="pg prev" style="left:1541.5px"><svg class="arr" width="32" height="32" viewBox="0 0 20 20"><path fill="currentColor" d="M18 8.800v2.400H6.400l3.900 3.900-1.400 1.900L2 10l6.900-7 1.400 1.900-3.900 3.900H18z"/></svg><span class="pt">Prev</span></span><span class="pg " style="left:1634.8px;width:60px">1</span><span class="pg cur" style="left:1672.8px;width:60px">2</span><span class="pg " style="left:1712.4px;width:60px">3</span><span class="pg " style="left:1752.9px;width:60px">4</span><span class="pg " style="left:1793.0px;width:60px">5</span><span class="pg " style="left:1833.2px;width:60px">6</span><span class="pg next" style="left:1894.8px"><span class="pt">Next</span><svg class="arr" width="32" height="32" viewBox="0 0 20 20"><path fill="currentColor" d="M2 11.200V8.800h11.600L9.700 4.900 11.100 3 18 10l-6.900 7-1.400-1.900 3.900-3.900H2z"/></svg></span></div>
</main>
</div>
</body>
</html>
